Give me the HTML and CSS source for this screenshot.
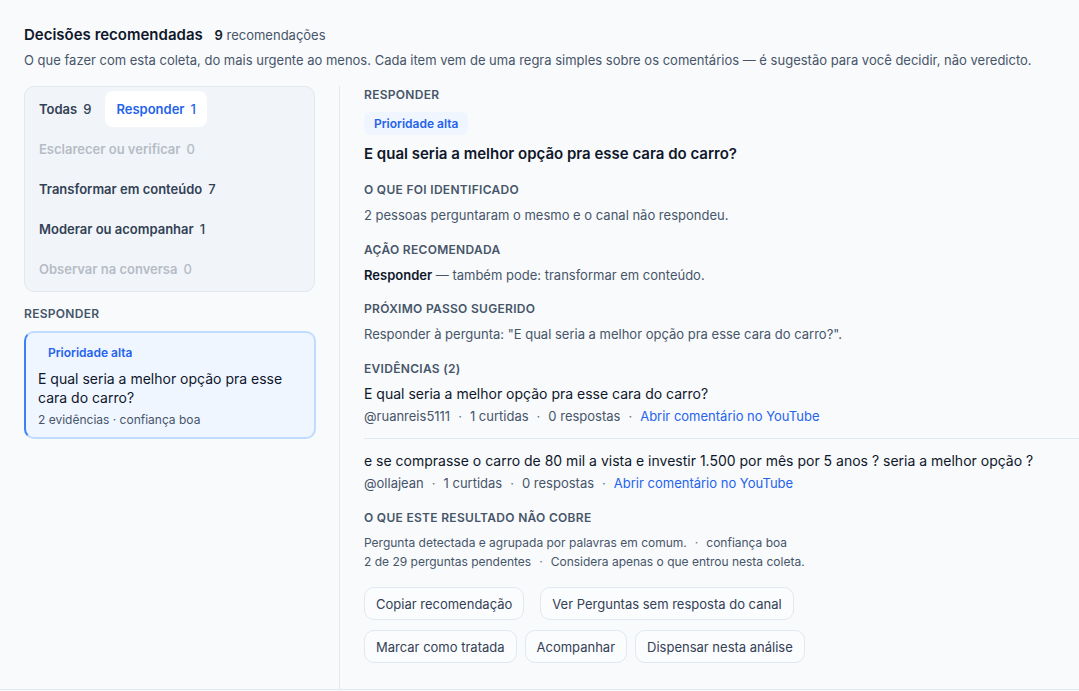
FILE: index.html
```html
<!DOCTYPE html>
<html lang="pt-BR">
<head>
<meta charset="utf-8">
<title>Decisões recomendadas</title>
<link rel="stylesheet" href="styles.css">
</head>
<body>
<div class="page">
  <header class="head">
    <h1 class="title">Decisões recomendadas <span class="count"><b>9</b> recomendações</span></h1>
    <p class="sub">O que fazer com esta coleta, do mais urgente ao menos. Cada item vem de uma regra simples sobre os comentários — é sugestão para você decidir, não veredicto.</p>
  </header>
  <div class="layout">
    <aside class="left">
      <nav class="filters">
        <button class="chip">Todas<span class="n">9</span></button>
        <button class="chip active">Responder<span class="n">1</span></button>
        <button class="chip off">Esclarecer ou verificar<span class="n">0</span></button>
        <button class="chip">Transformar em conteúdo<span class="n">7</span></button>
        <button class="chip">Moderar ou acompanhar<span class="n">1</span></button>
        <button class="chip off">Observar na conversa<span class="n">0</span></button>
      </nav>
      <div class="group-label">RESPONDER</div>
      <div class="card">
        <span class="badge plain">Prioridade alta</span>
        <div class="card-title">E qual seria a melhor opção pra esse cara do carro?</div>
        <div class="card-meta">2 evidências · confiança boa</div>
      </div>
    </aside>
    <main class="detail">
      <div class="label first">RESPONDER</div>
      <span class="badge">Prioridade alta</span>
      <h2 class="d-title">E qual seria a melhor opção pra esse cara do carro?</h2>

      <div class="label after-title">O QUE FOI IDENTIFICADO</div>
      <p class="text">2 pessoas perguntaram o mesmo e o canal não respondeu.</p>

      <div class="label">AÇÃO RECOMENDADA</div>
      <p class="text"><strong>Responder</strong> — também pode: transformar em conteúdo.</p>

      <div class="label">PRÓXIMO PASSO SUGERIDO</div>
      <p class="text">Responder à pergunta: "E qual seria a melhor opção pra esse cara do carro?".</p>

      <div class="label">EVIDÊNCIAS (2)</div>
      <div class="ev">
        <div class="ev-text">E qual seria a melhor opção pra esse cara do carro?</div>
        <div class="ev-meta">@ruanreis5111<span class="dot">·</span>1 curtidas<span class="dot">·</span>0 respostas<span class="dot">·</span><a class="link" href="#">Abrir comentário no YouTube</a></div>
      </div>
      <div class="ev sep">
        <div class="ev-text">e se comprasse o carro de 80 mil a vista e investir 1.500 por mês por 5 anos ? seria a melhor opção ?</div>
        <div class="ev-meta">@ollajean<span class="dot">·</span>1 curtidas<span class="dot">·</span>0 respostas<span class="dot">·</span><a class="link" href="#">Abrir comentário no YouTube</a></div>
      </div>

      <div class="label after-ev">O QUE ESTE RESULTADO NÃO COBRE</div>
      <p class="small">Pergunta detectada e agrupada por palavras em comum.<span class="dot">·</span>confiança boa</p>
      <p class="small">2 de 29 perguntas pendentes<span class="dot">·</span>Considera apenas o que entrou nesta coleta.</p>

      <div class="actions">
        <div class="row wide">
          <button class="btn">Copiar recomendação</button>
          <button class="btn">Ver Perguntas sem resposta do canal</button>
        </div>
        <div class="row">
          <button class="btn">Marcar como tratada</button>
          <button class="btn">Acompanhar</button>
          <button class="btn">Dispensar nesta análise</button>
        </div>
      </div>
    </main>
  </div>
</div>
</body>
</html>
```
FILE: styles.css
```css
* { box-sizing: border-box; }
html, body { margin: 0; padding: 0; }
body {
  background: #f8fafc;
  font-family: Inter, "Noto Sans", "Liberation Sans", sans-serif;
  color: #0f172a;
  width: 1079px;
  overflow: hidden;
}
.page {
  padding-top: 25px;
  border-bottom: 1px solid #e2e8f0;
}
.head { padding: 0 24px; }
.title {
  margin: 0;
  font-size: 15px;
  line-height: 20px;
  font-weight: 600;
  color: #0f172a;
}
.count {
  margin-left: 8px;
  font-size: 13px;
  font-weight: 400;
  color: #475569;
}
.count b { font-weight: 600; color: #0f172a; }
.sub {
  margin: 6px 0 0;
  font-size: 13px;
  line-height: 18px;
  color: #475569;
}
.layout {
  display: grid;
  grid-template-columns: 292px 1fr;
  column-gap: 23px;
  margin-top: 17px;
  padding-left: 24px;
}
.left { padding-bottom: 20px; }
.filters {
  display: flex;
  flex-wrap: wrap;
  gap: 4px;
  padding: 4px 4px 4px;
  width: 291px;
  background: #f1f5f9;
  border: 1px solid #e2e8f0;
  border-radius: 10px;
}
.chip {
  height: 36px;
  padding: 0 10px;
  border: 0;
  border-radius: 8px;
  background: transparent;
  font: inherit;
  font-size: 13px;
  font-weight: 600;
  color: #334155;
  cursor: pointer;
  display: inline-flex;
  align-items: center;
}
.chip .n { margin-left: 6px; font-weight: 500; }
.chip.active { background: #ffffff; color: #2563eb; padding: 0 11px; }
.chip.off { color: #b6bcc6; }
.group-label {
  margin-top: 14px;
  font-size: 12px;
  line-height: 16px;
  font-weight: 600;
  color: #475569;
  letter-spacing: 0.3px;
}
.card {
  margin-top: 9px;
  background: #eff6ff;
  border: 2px solid #bfdbfe;
  border-left-color: #3b82f6;
  border-radius: 10px;
  padding: 8px 12px 9px;
}
.badge {
  display: inline-block;
  height: 23px;
  line-height: 23px;
  padding: 0 10px;
  border-radius: 6px;
  background: #eff6ff;
  color: #2563eb;
  font-size: 12px;
  font-weight: 600;
}
.card-title {
  margin-top: 5px;
  font-size: 14px;
  line-height: 19px;
  color: #0f172a;
}
.card-meta {
  margin-top: 5px;
  font-size: 12px;
  line-height: 16px;
  color: #475569;
}
.detail {
  border-left: 1px solid #e2e8f0;
  padding: 1px 0 26px 24px;
  min-width: 0;
}
.label {
  margin-top: 17.5px;
  font-size: 12px;
  line-height: 16px;
  font-weight: 600;
  color: #475569;
  letter-spacing: 0.3px;
}
.label.first { margin-top: 0; margin-bottom: 9px; }
.label.after-title { margin-top: 18px; }
.label.after-ev { margin-top: 18px; }
.d-title {
  margin: 9px 0 0;
  font-size: 15px;
  line-height: 20px;
  font-weight: 600;
  color: #0f172a;
}
.text {
  margin: 8px 0 0;
  font-size: 13px;
  line-height: 18px;
  color: #475569;
}
.text strong { color: #0f172a; font-weight: 600; }
.ev { margin-top: 7.5px; padding-bottom: 13px; }
.ev.sep { margin-top: 0; padding-top: 12px; border-top: 1px solid #e2e8f0; padding-bottom: 0; }
.ev-text {
  font-size: 14px;
  line-height: 20px;
  color: #0f172a;
}
.ev-meta {
  margin-top: 3px;
  font-size: 13px;
  line-height: 18px;
  color: #475569;
}
.dot { margin: 0 8px; color: #64748b; }
.link { color: #2563eb; text-decoration: none; }
.small {
  margin: 0;
  font-size: 12px;
  line-height: 19px;
  color: #475569;
}
.label + .small { margin-top: 7px; }
.actions { margin-top: 16px; display: flex; flex-direction: column; gap: 10px; }
.row { display: flex; gap: 8px; }
.row.wide { gap: 16px; }
.btn {
  height: 33px;
  padding: 0 11px;
  background: #fbfcfe;
  border: 1px solid #e2e8f0;
  border-radius: 10px;
  font: inherit;
  font-size: 13px;
  color: #334155;
  cursor: pointer;
}
```
